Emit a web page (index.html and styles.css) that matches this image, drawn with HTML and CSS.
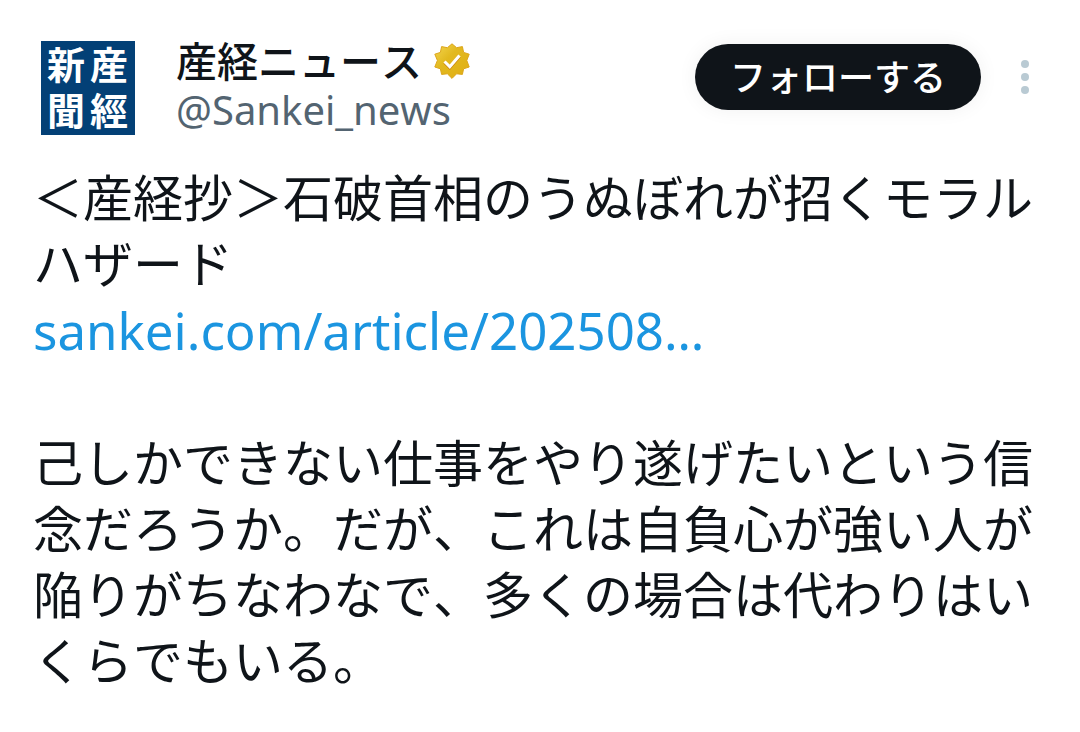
FILE: index.html
```
<!DOCTYPE html>
<html lang="ja">
<head>
  <meta charset="UTF-8" />
  <meta name="viewport" content="width=device-width, initial-scale=1" />
  <title>産経ニュース</title>
  <link rel="stylesheet" href="styles.css">
</head>
<body>

<article class="post">
  <header class="post-header">
    <svg class="avatar" viewBox="0 0 94 94" role="img" aria-label="産経新聞">
      <rect width="94" height="94" fill="#034076" />
      <g class="avatar-text">
        <text x="68" y="38">産</text>
        <text x="68" y="84">經</text>
        <text x="25" y="38">新</text>
        <text x="25" y="84">聞</text>
      </g>
    </svg>

    <div class="author">
      <div class="name-row">
        <span class="name">産経ニュース</span>
        <svg class="badge" viewBox="0 0 36 36" aria-hidden="true">
          <defs>
            <linearGradient id="gold" x1="0" y1="0" x2="1" y2="1">
              <stop offset="0" stop-color="#f4d650" />
              <stop offset="0.4" stop-color="#e2b91f" />
              <stop offset="1" stop-color="#e0ae14" />
            </linearGradient>
          </defs>
          <path fill="url(#gold)" stroke="#dca51a" stroke-width="1" stroke-linejoin="round" d="M18 .8L22.6 4.7L28.4 3.6L29.6 9.4L35.2 11.2L32.8 17.4L35.2 24L29.6 25.8L28.4 31.4L22.6 30.8L18 35.4L13.4 30.8L7.6 31.4L6.4 25.8L.8 24L3.4 17.4L.8 11.2L6.4 9.4L7.6 3.6L13.4 4.7Z" />
          <path fill="none" stroke="#c98208" stroke-width="3" d="M10.5 19.5L15.8 24.8L25.5 13.6" />
          <path fill="none" stroke="#fff" stroke-width="3" d="M10.5 18.5L15.8 23.8L25.5 12.6" />
        </svg>
      </div>
      <span class="handle">@Sankei_news</span>
    </div>

    <div class="actions">
      <button class="follow" type="button">フォローする</button>
      <button class="more" type="button" aria-label="もっと見る">
        <svg viewBox="0 0 10 34" aria-hidden="true">
          <circle cx="5" cy="4" r="4" />
          <circle cx="5" cy="17" r="4" />
          <circle cx="5" cy="30" r="4" />
        </svg>
      </button>
    </div>
  </header>

  <div class="post-body">
    <p>＜産経抄＞石破首相のうぬぼれが招くモラルハザード<br><a href="#">sankei.com/article/202508…</a></p>
    <p>己しかできない仕事をやり遂げたいという信念だろうか。だが、これは自負心が強い人が陥りがちなわなで、多くの場合は代わりはいくらでもいる。</p>
  </div>
</article>

</body>
</html>
```
FILE: styles.css
```
body {
  margin: 0;
  background: #fff;
  color: #0f1419;
  font-family: "Noto Sans", "Noto Sans CJK JP", sans-serif;
  font-kerning: none;
}
.post {
  padding: 36px 33px;
}
.post-header {
  display: flex;
  align-items: flex-start;
}
.avatar {
  width: 94px;
  height: 94px;
  margin: 5px 41px 0 8px;
  flex-shrink: 0;
}
.avatar-text {
  fill: #fff;
  font-family: "Liberation Sans", "Noto Sans CJK JP", sans-serif;
  font-size: 38px;
  font-weight: 700;
  text-anchor: middle;
}
.author {
  display: flex;
  flex-direction: column;
}
.name-row {
  display: flex;
  align-items: center;
  gap: 12px;
}
.name {
  font-size: 41px;
  font-weight: 500;
  line-height: 50px;
}
.badge {
  width: 36px;
  height: 36px;
}
.handle {
  color: #536471;
  font-size: 40px;
  line-height: 48px;
}
.actions {
  display: flex;
  align-items: center;
  gap: 30px;
  margin: 8px 8px 0 auto;
}
.follow {
  height: 66px;
  padding: 0 35px 4px;
  border: none;
  border-radius: 33px;
  background: #0f1419;
  box-shadow: 0 0 20px rgba(0, 0, 0, 0.06);
  color: #fff;
  font-family: inherit;
  font-size: 36px;
  font-weight: 500;
  cursor: pointer;
}
.more {
  padding: 0 9px;
  border: none;
  background: none;
  cursor: pointer;
}
.more svg {
  display: block;
  width: 10px;
  height: 34px;
  fill: #b9cad3;
}
.post-body {
  margin-top: 30px;
  font-size: 50px;
  line-height: 66px;
}
.post-body p {
  margin: 0 0 66px;
}
.post-body p:last-child {
  margin-bottom: 0;
}
.post-body a {
  color: #1b95e0;
  font-size: 51px;
  text-decoration: none;
}
```
